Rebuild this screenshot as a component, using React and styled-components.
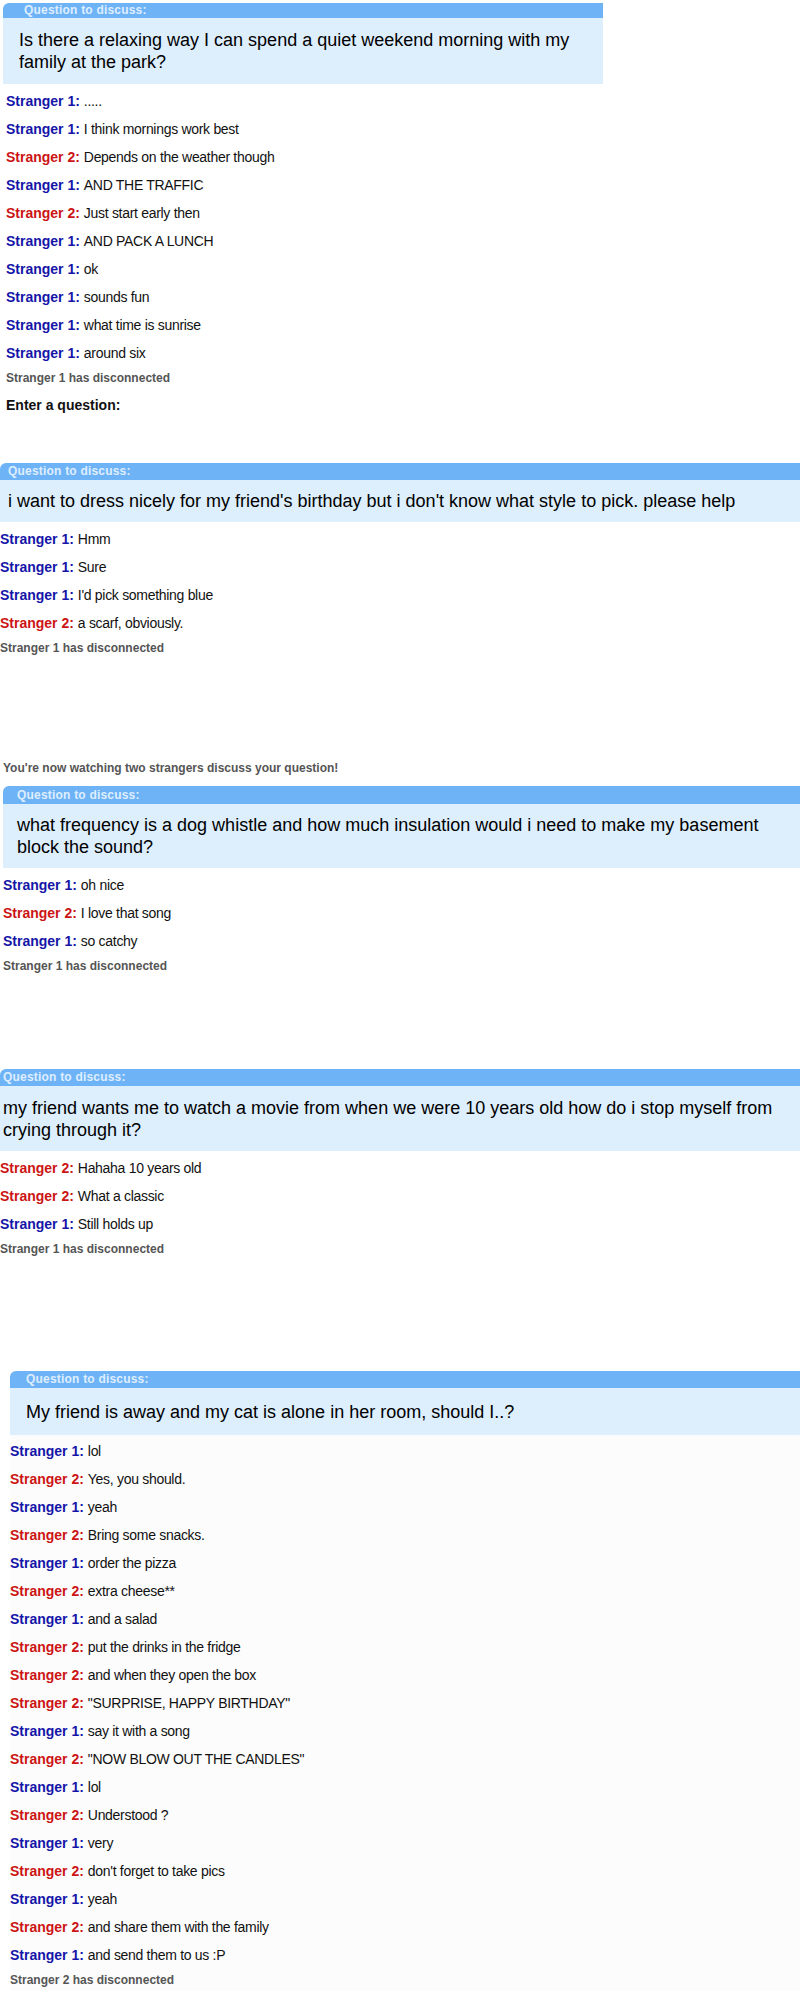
import React from "react";
import styled, { createGlobalStyle } from "styled-components";

const Global = createGlobalStyle`
  html, body { margin: 0; padding: 0; background: #fff; }
  body { font-family: "Liberation Sans", Arial, sans-serif; color: #000; }
`;

const Page = styled.div`
  width: 800px;
  overflow: hidden;
  padding-top: 3px;
`;

const Section = styled.section`
  margin-left: ${(p) => p.$left}px;
  width: ${(p) => p.$width}px;
  margin-top: ${(p) => p.$gap}px;
  background: ${(p) => p.$bg || "transparent"};
`;

const Header = styled.div`
  height: ${(p) => p.$h || 16}px;
  background: #6fb3f7;
  border-top-left-radius: 6px;
  color: #deeeff;
  font-weight: bold;
  font-size: 12px;
  line-height: ${(p) => p.$h || 16}px;
  padding-left: ${(p) => p.$pad}px;
  letter-spacing: 0.2px;
`;

const Question = styled.div`
  background: #ddeefd;
  font-size: 18px;
  line-height: 22px;
  padding: ${(p) => p.$vpad}px 10px ${(p) => p.$vpad}px ${(p) => p.$pad}px;
  min-height: ${(p) => p.$min}px;
  box-sizing: border-box;
  display: flex;
  flex-direction: column;
  justify-content: center;
`;

const Log = styled.div`
  padding-left: ${(p) => p.$pad}px;
  padding-top: ${(p) => p.$top || 2}px;
`;

const Line = styled.div`
  height: 28px;
  line-height: 28px;
  font-size: 14px;
  white-space: nowrap;
`;

const Who = styled.b`
  color: ${(p) => (p.$n === 1 ? "#1515a8" : "#cc1414")};
  font-weight: bold;
`;

const Msg = styled.span`
  color: #111;
  letter-spacing: -0.3px;
`;

const Notice = styled.div`
  height: 22px;
  line-height: 22px;
  font-size: 12px;
  font-weight: bold;
  color: #555;
  padding-left: ${(p) => p.$pad || 0}px;
  white-space: nowrap;
  margin-top: ${(p) => p.$top || 0}px;
`;

const Prompt = styled.div`
  height: 22px;
  line-height: 22px;
  font-size: 14px;
  font-weight: bold;
  color: #111;
  padding-left: ${(p) => p.$pad}px;
  margin-top: 5px;
`;

function Chat({ lines, pad, top }) {
  return (
    <Log $pad={pad} $top={top}>
      {lines.map(([n, t], i) => (
        <Line key={i}>
          <Who $n={n}>Stranger {n}:</Who> <Msg>{t}</Msg>
        </Line>
      ))}
    </Log>
  );
}

const chat1 = [
  [1, "....."],
  [1, "I think mornings work best"],
  [2, "Depends on the weather though"],
  [1, "AND THE TRAFFIC"],
  [2, "Just start early then"],
  [1, "AND PACK A LUNCH"],
  [1, "ok"],
  [1, "sounds fun"],
  [1, "what time is sunrise"],
  [1, "around six"],
];
const chat2 = [
  [1, "Hmm"],
  [1, "Sure"],
  [1, "I'd pick something blue"],
  [2, "a scarf, obviously."],
];
const chat3 = [
  [1, "oh nice"],
  [2, "I love that song"],
  [1, "so catchy"],
];
const chat4 = [
  [2, "Hahaha 10 years old"],
  [2, "What a classic"],
  [1, "Still holds up"],
];
const chat5 = [
  [1, "lol"],
  [2, "Yes, you should."],
  [1, "yeah"],
  [2, "Bring some snacks."],
  [1, "order the pizza"],
  [2, "extra cheese**"],
  [1, "and a salad"],
  [2, "put the drinks in the fridge"],
  [2, "and when they open the box"],
  [2, "\"SURPRISE, HAPPY BIRTHDAY\""],
  [1, "say it with a song"],
  [2, "\"NOW BLOW OUT THE CANDLES\""],
  [1, "lol"],
  [2, "Understood ?"],
  [1, "very"],
  [2, "don't forget to take pics"],
  [1, "yeah"],
  [2, "and share them with the family"],
  [1, "and send them to us :P"],
];

export default function App() {
  return (
    <>
      <Global />
      <Page>
        <Section $left={3} $width={600} $gap={0}>
          <Header $pad={21} $h={15}>Question to discuss:</Header>
          <Question $pad={16} $vpad={0} $min={66}>
            Is there a relaxing way I can spend a quiet weekend morning with my
            family at the park?
          </Question>
        </Section>
        <Section $left={3} $width={600} $gap={0}>
          <Chat lines={chat1} pad={3} top={3} />
          <Notice $pad={3}>Stranger 1 has disconnected</Notice>
          <Prompt $pad={3}>Enter a question:</Prompt>
        </Section>

        <Section $left={0} $width={800} $gap={47}>
          <Header $pad={8} $h={17}>Question to discuss:</Header>
          <Question $pad={8} $vpad={0} $min={42}>
            i want to dress nicely for my friend's birthday but i don't know what style to pick. please help
          </Question>
          <Chat lines={chat2} pad={-7} top={3} />
          <Notice $pad={-7}>Stranger 1 has disconnected</Notice>
        </Section>

        <Notice $pad={3} $top={98}>
          You're now watching two strangers discuss your question!
        </Notice>

        <Section $left={3} $width={797} $gap={7}>
          <Header $pad={14} $h={18}>Question to discuss:</Header>
          <Question $pad={14} $vpad={0} $min={64}>
            what frequency is a dog whistle and how much insulation would i need
            to make my basement block the sound?
          </Question>
          <Chat lines={chat3} pad={0} top={3} />
          <Notice $pad={0}>Stranger 1 has disconnected</Notice>
        </Section>

        <Section $left={0} $width={800} $gap={92}>
          <Header $pad={3} $h={17}>Question to discuss:</Header>
          <Question $pad={3} $vpad={0} $min={65}>
            my friend wants me to watch a movie from when we were 10 years old
            how do i stop myself from crying through it?
          </Question>
          <Chat lines={chat4} pad={-8} top={3} />
          <Notice $pad={-8}>Stranger 1 has disconnected</Notice>
        </Section>

        <Section $left={10} $width={790} $gap={111} $bg="#fcfcfc">
          <Header $pad={16} $h={17}>Question to discuss:</Header>
          <Question $pad={16} $vpad={0} $min={47}>
            My friend is away and my cat is alone in her room, should I..?
          </Question>
          <Chat lines={chat5} pad={-1} top={0} />
          <Notice $pad={-1}>Stranger 2 has disconnected</Notice>
        </Section>
      </Page>
    </>
  );
}
